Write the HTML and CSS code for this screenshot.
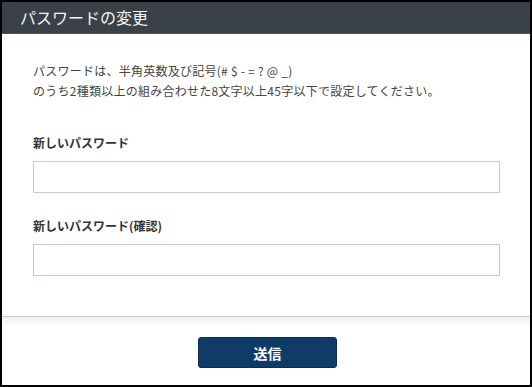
FILE: index.html
```html
<!DOCTYPE html>
<html lang="ja">
<head>
    <meta charset="UTF-8">
    <meta name="viewport" content="width=device-width, initial-scale=1.0">
    <title>パスワードの変更</title>
    <link rel="stylesheet" href="styles.css">
</head>
<body>
    <div class="dialog">
        <div class="dialog-header">パスワードの変更</div>
        <div class="dialog-body">
            <p class="note">パスワードは、半角英数及び記号(# $ - = ? @ _)<br>のうち2種類以上の組み合わせた8文字以上45字以下で設定してください。</p>
            <label class="field-label" for="pw">新しいパスワード</label>
            <input class="field-input" type="password" id="pw">
            <label class="field-label second" for="pw2">新しいパスワード(確認)</label>
            <input class="field-input" type="password" id="pw2">
        </div>
        <div class="dialog-footer">
            <button class="submit">送信</button>
        </div>
    </div>
</body>
</html>
```

FILE: styles.css
```css
body {
    margin: 0;
    padding: 0;
    font-family: "Noto Sans CJK JP", "Noto Sans", sans-serif;
    background: #fff;
}

.dialog {
    width: 532px;
    height: 387px;
    box-sizing: border-box;
    border: 2px solid #000;
    display: flex;
    flex-direction: column;
    background: #fff;
}

.dialog-header {
    height: 32px;
    line-height: 31px;
    background-color: #3a4148;
    border-bottom: 1px solid #4a5158;
    box-sizing: border-box;
    color: #f4f4f4;
    font-size: 16px;
    padding-left: 18px;
}

.dialog-body {
    padding: 27px 30px 40px 31px;
    display: flex;
    flex-direction: column;
}

.note {
    margin: 0;
    font-size: 12px;
    line-height: 20px;
    letter-spacing: 0.25px;
    color: #444;
}

.field-label {
    margin-top: 33px;
    font-size: 12px;
    line-height: 18px;
    font-weight: bold;
    color: #333;
}

.field-label.second {
    margin-top: 24px;
}

.field-input {
    margin-top: 9px;
    height: 32px;
    box-sizing: border-box;
    border: 1px solid #c3cdd7;
    border-radius: 0;
    padding: 0 8px;
    font-size: 13px;
    outline: none;
}

.dialog-footer {
    flex: 1;
    border-top: 1px solid #c3ccd5;
    background: linear-gradient(to bottom, #eef1f3, #fff 10px);
    display: flex;
    justify-content: center;
    align-items: flex-start;
    padding-top: 20px;
}

.submit {
    width: 139px;
    height: 31px;
    margin-left: 3px;
    background-color: #0f3c66;
    color: #fff;
    border: 1px solid #0a2f52;
    border-radius: 3px;
    font-family: inherit;
    font-size: 14px;
    font-weight: bold;
    cursor: pointer;
}
```
